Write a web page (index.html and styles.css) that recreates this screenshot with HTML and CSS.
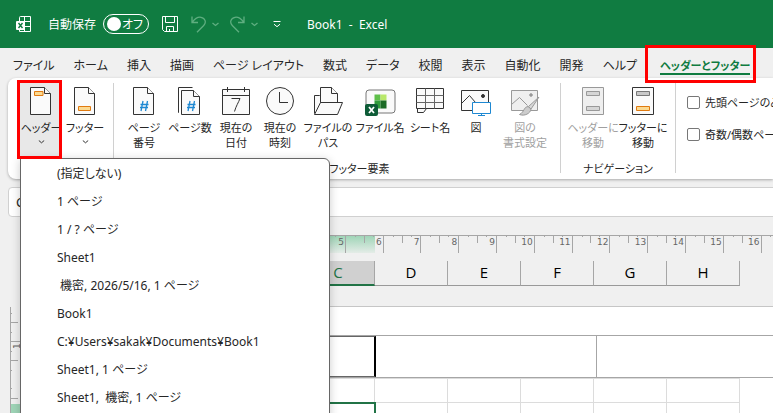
FILE: index.html
```html
<!DOCTYPE html>
<html lang="ja">
<head>
<meta charset="UTF-8">
<meta name="viewport" content="width=device-width, initial-scale=1.0">
<title>Book1 - Excel</title>
<link rel="stylesheet" href="styles.css">
</head>
<body>

<header class="titlebar">
    <svg class="app-icon" width="16" height="17" viewBox="0 0 16 17" fill="none" stroke="#fff">
        <path d="M3.500 5V1.500a1 1 0 0 1 1-1h10v15h-11V14M8.500.5v15M3.500 5.500h11M8 10.500h6.500"/>
        <rect x="0" y="5" width="9" height="9" rx="1" fill="#fff" stroke="none"/>
        <path d="M2.500 7l4 5M6.500 7l-4 5" stroke="#107c41" stroke-width="1.400"/>
    </svg>
    <span class="autosave-label">自動保存</span>
    <button class="autosave" role="switch" aria-checked="false"><span class="knob"></span>オフ</button>
    <button class="quick save" aria-label="保存">
        <svg width="16" height="16" viewBox="0 0 16 16" fill="none" stroke="#fff">
            <path d="M.5.5h15v15H2.500l-2-2zM3.500.5v6h9v-6M4.500 15.500v-5h7v5M7.500 13v2.500"/>
        </svg>
    </button>
    <button class="quick undo" aria-label="元に戻す">
        <svg width="28" height="17" viewBox="0 0 28 17" fill="none" stroke="#5fae80" stroke-width="1.300">
            <path d="M1 .5v6h6M1.200 6.300C4 2.500 7 .8 10 1.300c4.500.8 5.500 5.500 2.700 8.200L6 16.200"/>
            <path d="M21.500 7l3 2.500 3-2.500"/>
        </svg>
    </button>
    <button class="quick redo" aria-label="やり直し">
        <svg width="28" height="17" viewBox="0 0 28 17" fill="none" stroke="#5fae80" stroke-width="1.300">
            <path d="M14 .5v6H8M13.800 6.300C11 2.500 8 .8 5 1.300.5 2.100-.5 6.800 2.300 9.500L9 16.200"/>
            <path d="M21.500 7l3 2.500 3-2.500"/>
        </svg>
    </button>
    <button class="quick customize" aria-label="クイック アクセス ツール バーのカスタマイズ">
        <svg width="8" height="7" viewBox="0 0 8 7" fill="none" stroke="#fff">
            <path d="M.5.5h7M1 3.200l3 2.500 3-2.500"/>
        </svg>
    </button>
    <span class="book-title">Book1 &nbsp;- &nbsp;Excel</span>
</header>

<nav class="tabs">
    <button class="tab">ファイル</button>
    <button class="tab">ホーム</button>
    <button class="tab">挿入</button>
    <button class="tab">描画</button>
    <button class="tab">ページ レイアウト</button>
    <button class="tab">数式</button>
    <button class="tab">データ</button>
    <button class="tab">校閲</button>
    <button class="tab">表示</button>
    <button class="tab">自動化</button>
    <button class="tab">開発</button>
    <button class="tab">ヘルプ</button>
    <button class="tab active">ヘッダーとフッター<span class="mark"></span></button>
</nav>

<section class="ribbon">
    <div class="group first">
        <div class="tools">
            <button class="tool w42 open" aria-haspopup="menu" aria-expanded="true">
                <svg width="30" height="30" viewBox="0 0 30 30" fill="#fafafa" stroke="#333">
                    <path d="M4.500 1.500h14l6 6v21h-20z"/><path d="M18.500 1.500v6h6"/>
                    <path d="M17 5.500H8.500v4h8.500z" fill="#fbd990" stroke="#e07a10"/>
                </svg>
                <span>ヘッダー</span>
                <svg class="chevron" width="7" height="4" viewBox="0 0 7 4" fill="none" stroke="#333"><path d="M.8.5l2.700 2.300L6.200.5"/></svg>
                <span class="mark"></span>
            </button>
            <button class="tool w42" aria-haspopup="menu">
                <svg width="30" height="30" viewBox="0 0 30 30" fill="#fafafa" stroke="#333">
                    <path d="M4.500 1.500h14l6 6v21h-20z"/><path d="M18.500 1.500v6h6"/>
                    <path d="M8.500 20.500h12v4h-12z" fill="#fbd990" stroke="#e07a10"/>
                </svg>
                <span>フッター</span>
                <svg class="chevron" width="7" height="4" viewBox="0 0 7 4" fill="none" stroke="#333"><path d="M.8.5l2.700 2.300L6.200.5"/></svg>
            </button>
        </div>
    </div>

    <div class="group">
        <div class="tools">
            <button class="tool w46">
                <svg width="30" height="30" viewBox="0 0 30 30" fill="#fafafa" stroke="#333">
                    <path d="M4.500 1.500h14l6 6v21h-20z"/><path d="M18.500 1.500v6h6"/>
                    <path d="M14 15l-2 10M18.500 15l-2 10M11.500 18.500h8M11 21.500h8" fill="none" stroke="#1e88d2" stroke-width="1.300"/>
                </svg>
                <span>ページ<br>番号</span>
            </button>
            <button class="tool w46">
                <svg width="30" height="30" viewBox="0 0 30 30" fill="#fafafa" stroke="#333">
                    <path d="M4 26.500H3.500v-25h14" fill="none"/>
                    <path d="M6.500 4.500h12l6 6v18h-18z"/><path d="M18.500 4.500v6h6"/>
                    <path d="M15 15l-2 10M19.500 15l-2 10M12.500 18.500h8M12 21.500h8" fill="none" stroke="#1e88d2" stroke-width="1.300"/>
                </svg>
                <span>ページ数</span>
            </button>
            <button class="tool w46">
                <svg width="30" height="30" viewBox="0 0 30 30" fill="#fafafa" stroke="#333">
                    <path d="M1.500 3.500h27v25h-27zM1.500 9.500h27M6.500 1v5M23.500 1v5"/>
                    <path d="M10.500 12.500h8.500c-1.500 4-4 7.500-5.500 13" fill="none"/>
                </svg>
                <span>現在の<br>日付</span>
            </button>
            <button class="tool w42">
                <svg width="30" height="30" viewBox="0 0 30 30" fill="#fafafa" stroke="#333">
                    <circle cx="15" cy="15" r="13.500"/><path d="M14.500 6v10.500H23" fill="none"/>
                </svg>
                <span>現在の<br>時刻</span>
            </button>
            <button class="tool w54">
                <svg width="30" height="30" viewBox="0 0 30 30" fill="#fafafa" stroke="#333">
                    <path d="M1.500 27.500v-18h5l3 3h14v4"/>
                    <path d="M7.500 17V1.500h11l6 6V17"/><path d="M18.500 1.500v6h6" />
                    <path d="M7.500 16.500h22l-5 12h-23z"/>
                </svg>
                <span>ファイルの<br>パス</span>
            </button>
            <button class="tool w50">
                <svg width="32" height="30" viewBox="0 0 32 30">
                    <rect x="2" y="4" width="29" height="23" rx="3" fill="#fafafa" stroke="#777"/>
                    <path d="M10.500 8.500h6v6h-6z" fill="#5fbf4a"/><path d="M16.500 8.500h6v6h-6z" fill="#b9e86a"/>
                    <path d="M10.500 14.500h6v8h-6z" fill="#2f9c3b"/><path d="M16.500 14.500h6v8h-6z" fill="#1c6b26"/>
                    <rect x="1" y="18" width="13" height="12" rx="2" fill="#0d5c37"/>
                    <path d="M5 21l5 6M10 21l-5 6" stroke="#fff" stroke-width="1.800"/>
                </svg>
                <span>ファイル名</span>
            </button>
            <button class="tool w50">
                <svg width="30" height="30" viewBox="0 0 30 30" fill="#fafafa" stroke="#333">
                    <path d="M2.500 22.500v4h6l3-4"/>
                    <path d="M1.500 2.500h27v20h-27z"/>
                    <path d="M1.500 9.500h27M1.500 16.500h27M10.500 2.500v20M19.500 2.500v20" stroke="#666"/>
                </svg>
                <span>シート名</span>
            </button>
            <button class="tool w42">
                <svg width="32" height="30" viewBox="0 0 32 30" fill="#fafafa" stroke="#333">
                    <path d="M1.500 4.500h27v20h-27z"/>
                    <path d="M1.500 17.500l8-8 6 7" fill="none"/><circle cx="23" cy="10" r="1.500" fill="#333"/>
                    <path d="M12.500 16.500h18v11h-18z" fill="#fff" stroke="#1e88d2"/><path d="M21.500 28v2M18 29.500h7" stroke="#1e88d2"/>
                </svg>
                <span>図</span>
            </button>
            <button class="tool w56" disabled>
                <svg width="32" height="30" viewBox="0 0 32 30" fill="#efefef" stroke="#999">
                    <path d="M2.500 4.500h26v20h-26z"/>
                    <path d="M2.500 18.500l8-7 8 8" fill="none"/><circle cx="22" cy="9" r="1.300" fill="#999"/>
                    <path d="M30 11L19.500 20.500l2.500 2.500z" fill="#d8d8d8"/>
                    <path d="M19 20.500c-5 1-3 5-8.500 8 5 2 11-1 11.500-5.500z" fill="#ccc"/>
                </svg>
                <span>図の<br>書式設定</span>
            </button>
        </div>
        <div class="group-name">ヘッダー/フッター要素</div>
    </div>

    <div class="group">
        <div class="tools">
            <button class="tool w50" disabled>
                <svg width="30" height="30" viewBox="0 0 30 30" fill="#efefef" stroke="#999">
                    <path d="M4.500 1.500h21v27h-21z"/>
                    <path d="M8.500 5.500h13v4h-13zM8.500 20.500h13v4h-13z" fill="#d6d6d6"/>
                </svg>
                <span>ヘッダーに<br>移動</span>
            </button>
            <button class="tool w50">
                <svg width="30" height="30" viewBox="0 0 30 30" fill="#fafafa" stroke="#333">
                    <path d="M4.500 1.500h21v27h-21z"/>
                    <path d="M8.500 5.500h13v4h-13z" fill="#c8c8c8" stroke="#777"/>
                    <path d="M8.500 20.500h13v4h-13z" fill="#fbd990" stroke="#e07a10"/>
                </svg>
                <span>フッターに<br>移動</span>
            </button>
        </div>
        <div class="group-name">ナビゲーション</div>
    </div>

    <div class="group options">
        <label><input type="checkbox">先頭ページのみ別指定</label>
        <label><input type="checkbox">奇数/偶数ページ別指定</label>
    </div>

    <ul class="menu" role="menu">
        <li role="menuitem">(指定しない)</li>
        <li role="menuitem">1 ページ</li>
        <li role="menuitem">1 / ? ページ</li>
        <li role="menuitem">Sheet1</li>
        <li role="menuitem">&nbsp;機密, 2026/5/16, 1 ページ</li>
        <li role="menuitem">Book1</li>
        <li role="menuitem">C:¥Users¥sakak¥Documents¥Book1</li>
        <li role="menuitem">Sheet1, 1 ページ</li>
        <li role="menuitem">Sheet1, &nbsp;機密, 1 ページ</li>
    </ul>
</section>

<div class="formula-row">
    <input class="name-box" type="text" value="C2" aria-label="名前ボックス">
    <input class="formula" type="text" aria-label="数式バー">
</div>

<main class="sheet">
    <div class="ruler">
        <span>1</span><span>2</span><span>3</span><span>4</span><span>5</span><span>6</span>
        <span>7</span><span>8</span><span>9</span><span>10</span><span>11</span><span>12</span>
        <span>13</span><span>14</span><span>15</span><span>16</span><span></span>
    </div>
    <div class="headings">
        <span>A</span><span>B</span><span class="current">C</span><span>D</span><span>E</span><span>F</span><span>G</span><span>H</span>
    </div>
    <div class="page-row">
        <svg class="side-ruler" width="18" height="106" viewBox="0 0 18 106">
            <path d="M1 97h17v9H1z" fill="#9fd5b7"/>
            <path d="M.5 0v106M0 15.500h8M0 34.500h12M0 53.500h8M0 91.500h8M0 6.500h2M0 25.500h2M0 44.500h2M0 63.500h2M0 81.500h2" stroke="#a6a6a6"/>
            <text x="-42" y="10" transform="rotate(-90)">1</text>
        </svg>
        <div class="page">
            <div class="page-header">
                <div class="section editing"></div>
                <div class="section"></div>
                <div class="section"></div>
            </div>
            <table class="cells">
                <tr><td></td><td></td><td></td><td></td><td></td><td></td><td></td><td></td></tr>
                <tr><td></td><td></td><td class="selected"></td><td></td><td></td><td></td><td></td><td></td></tr>
            </table>
        </div>
    </div>
</main>

</body>
</html>
```

FILE: styles.css
```css
* {
    box-sizing: border-box;
}
body {
    margin: 0;
    height: 100vh;
    overflow: hidden;
    display: flex;
    flex-direction: column;
    background-color: #f0f0f0;
    color: #262626;
    font-family: "Noto Sans", "Noto Sans CJK JP", sans-serif;
    font-size: 12px;
    font-feature-settings: "palt";
}
button {
    margin: 0;
    padding: 0;
    border: none;
    background: none;
    color: inherit;
    font: inherit;
    font-feature-settings: inherit;
    white-space: nowrap;
}
svg {
    display: block;
    flex: none;
}

/* title bar */
.titlebar {
    flex: none;
    height: 48px;
    display: flex;
    align-items: center;
    padding-left: 16px;
    background-color: #107c41;
    color: #fff;
    white-space: nowrap;
}
.autosave-label {
    margin-left: 16px;
}
.autosave {
    width: 46px;
    height: 20px;
    margin-left: 7px;
    padding: 0 5px 0 3px;
    display: flex;
    align-items: center;
    justify-content: space-between;
    border: 1px solid #fff;
    border-radius: 10px;
}
.knob {
    width: 14px;
    height: 14px;
    border-radius: 50%;
    background-color: #fff;
}
.quick {
    margin-left: 13px;
}
.quick.redo {
    margin-left: 11px;
}
.quick.customize {
    margin-left: 15px;
}
.book-title {
    margin-left: 26px;
}

/* ribbon tabs */
.tabs {
    flex: none;
    height: 30px;
    display: flex;
    gap: 19px;
    padding-left: 13px;
}
.tab {
    position: relative;
    height: 33px;
}
.tab.active {
    margin-left: 4px;
    color: #107c41;
    font-size: 11px;
    font-weight: bold;
}
.tab.active::after {
    content: "";
    position: absolute;
    left: 0;
    right: 0;
    bottom: 6px;
    height: 2px;
    background-color: #107c41;
}
.mark {
    position: absolute;
    z-index: 3;
    border: 3px solid #f00;
}
.tab .mark {
    inset: -3px -6px -2px -15px;
}

/* ribbon */
.ribbon {
    position: relative;
    flex: none;
    height: 101px;
    margin-left: 8px;
    display: flex;
    padding: 5px 0 0 12px;
    background-color: #fff;
    border-radius: 8px 0 0 8px;
    box-shadow: 0 1px 3px rgba(0, 0, 0, 0.3);
    font-size: 11px;
}
.group {
    flex: none;
    height: 90px;
    display: flex;
    flex-direction: column;
    justify-content: space-between;
    padding: 0 7px;
    border-right: 1px solid #d0d0d0;
}
.group.first {
    padding-left: 0;
}
.tools {
    display: flex;
}
.first .tools {
    gap: 2px;
}
.tool {
    position: relative;
    height: 76px;
    padding-top: 3px;
    display: flex;
    flex-direction: column;
    align-items: center;
    line-height: 15px;
}
.tool > svg {
    margin-bottom: 4px;
}
.tool .chevron {
    margin: 5px 0 0;
}
.tool:disabled {
    color: #a0a0a0;
}
.w42 { width: 42px; }
.w46 { width: 46px; }
.w50 { width: 50px; }
.w54 { width: 54px; }
.w56 { width: 56px; }
.tool.open {
    background-color: #e8e8e8;
}
.tool .mark {
    inset: -3px 0 0 -3px;
}
.group-name {
    margin-bottom: -3px;
    line-height: 15px;
    text-align: center;
}
.options {
    justify-content: flex-start;
    gap: 14px;
    padding: 10px 0 0 11px;
    border: none;
}
.options label {
    display: flex;
    align-items: center;
    gap: 5px;
    height: 18px;
    white-space: nowrap;
}
.options input {
    appearance: none;
    width: 13px;
    height: 13px;
    margin: 0;
    border: 1px solid #777;
    border-radius: 2px;
    background-color: #fff;
}

/* header drop-down */
.menu {
    position: absolute;
    z-index: 2;
    top: 80px;
    left: 12px;
    width: 310px;
    height: 400px;
    margin: 0;
    padding: 1px 0 0 36px;
    list-style: none;
    background-color: #fff;
    border: 1px solid #666;
    border-radius: 0 6px 0 0;
    box-shadow: 0 2px 10px rgba(0, 0, 0, 0.2);
    font-size: 12px;
}
.menu li {
    line-height: 28px;
    white-space: nowrap;
}

/* formula bar */
.formula-row {
    flex: none;
    display: flex;
    gap: 8px;
    margin: 8px 0 18px 8px;
}
.formula-row input {
    height: 30px;
    border: 1px solid #d0d0d0;
    border-radius: 4px;
    padding: 0 7px;
    background-color: #fff;
    color: inherit;
    font: inherit;
    font-size: 13px;
}
.name-box {
    width: 110px;
}
.formula-row .formula {
    flex: 1;
    border-right: none;
    border-radius: 4px 0 0 4px;
}

/* page layout view */
.sheet {
    flex: 1;
    display: flex;
    flex-direction: column;
    min-height: 0;
}
.ruler {
    flex: none;
    height: 18px;
    display: flex;
    margin-left: 157px;
    overflow: hidden;
    border-top: 1px solid #a6a6a6;
    background: linear-gradient(#9fd5b7, #e4ece7) 145px 0 / 73px 17px no-repeat;
    color: #666;
    font: 9px/13px "DejaVu Sans", sans-serif;
}
.ruler span {
    flex: none;
    width: 1cm;
    padding-right: 1px;
    text-align: right;
    border-right: 1px solid #a6a6a6;
    background:
        linear-gradient(#a6a6a6, #a6a6a6) 50% 0 / 1px 7px no-repeat,
        linear-gradient(#a6a6a6, #a6a6a6) 25% 0 / 1px 1px no-repeat,
        linear-gradient(#a6a6a6, #a6a6a6) 75% 0 / 1px 1px no-repeat;
}
.headings {
    flex: none;
    display: flex;
    margin: 8px 0 20px 156px;
    color: #000;
    font: 15px/23px "Open Sans", "Noto Sans", sans-serif;
}
.headings span {
    width: 73px;
    height: 25px;
    text-align: center;
    border-right: 1px solid #a6a6a6;
    border-bottom: 1px solid #999;
}
.headings .current {
    color: #217346;
    background-color: #d0d0d0;
    border-bottom: 2px solid #217346;
}
.page-row {
    flex: 1;
    display: flex;
    gap: 8px;
    min-height: 0;
    padding-left: 10px;
    overflow: hidden;
}
.side-ruler {
    margin-top: 1px;
}
.side-ruler text {
    fill: #666;
    font: 9px "DejaVu Sans", sans-serif;
}
.page {
    flex: 1;
    min-width: 0;
    padding: 28px 0 0 118px;
    background-color: #fff;
    border-top: 1px solid #c6c6c6;
    overflow: hidden;
}
.page-header {
    display: flex;
    height: 43px;
    border: 1px solid #a6a6a6;
    border-right: none;
}
.section {
    flex: none;
    width: 221px;
    border-right: 1px solid #a6a6a6;
}
.section.editing {
    border: 1px solid #666;
    border-right: 2px solid #000;
}
.cells {
    margin-left: 1px;
    table-layout: fixed;
    width: 585px;
    border-collapse: collapse;
}
.cells td {
    height: 24px;
    padding: 0;
    border: 1px solid #dcdcdc;
}
.cells .selected {
    border: 2px solid #217346;
}
```
